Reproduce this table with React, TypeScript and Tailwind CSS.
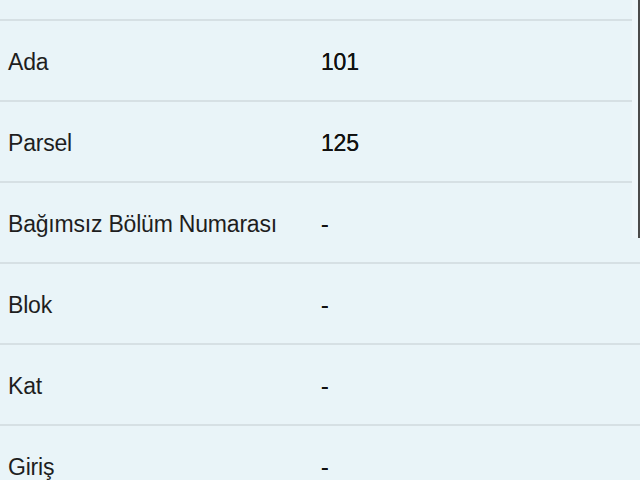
const rows = [
  { label: "Ada", value: "101" },
  { label: "Parsel", value: "125" },
  { label: "Bağımsız Bölüm Numarası", value: "-" },
  { label: "Blok", value: "-" },
  { label: "Kat", value: "-" },
  { label: "Giriş", value: "-" },
];

export default function App() {
  return (
    <div
      className="relative w-[640px] h-[480px] overflow-hidden bg-[#e9f4f8] text-[#1e1e1e]"
      style={{ fontFamily: '"Liberation Sans", Arial, sans-serif' }}
    >
      <div className="h-[21px] border-b-2 border-[#d6e0e4]" />
      {rows.map((r) => (
        <div
          key={r.label}
          className="flex items-center h-[81px] pt-[3px] border-b-2 border-[#d6e0e4] text-[23px] tracking-[-0.2px]"
        >
          <div className="w-[321px] pl-2">{r.label}</div>
          <div className="text-[#111] [text-shadow:0_0_0.4px_#111]">{r.value}</div>
        </div>
      ))}
      <div className="absolute right-0 top-0 w-[8px] h-[238px] bg-[#eef6fa] border-r-2 border-[#4a4a4a]" />
    </div>
  );
}
